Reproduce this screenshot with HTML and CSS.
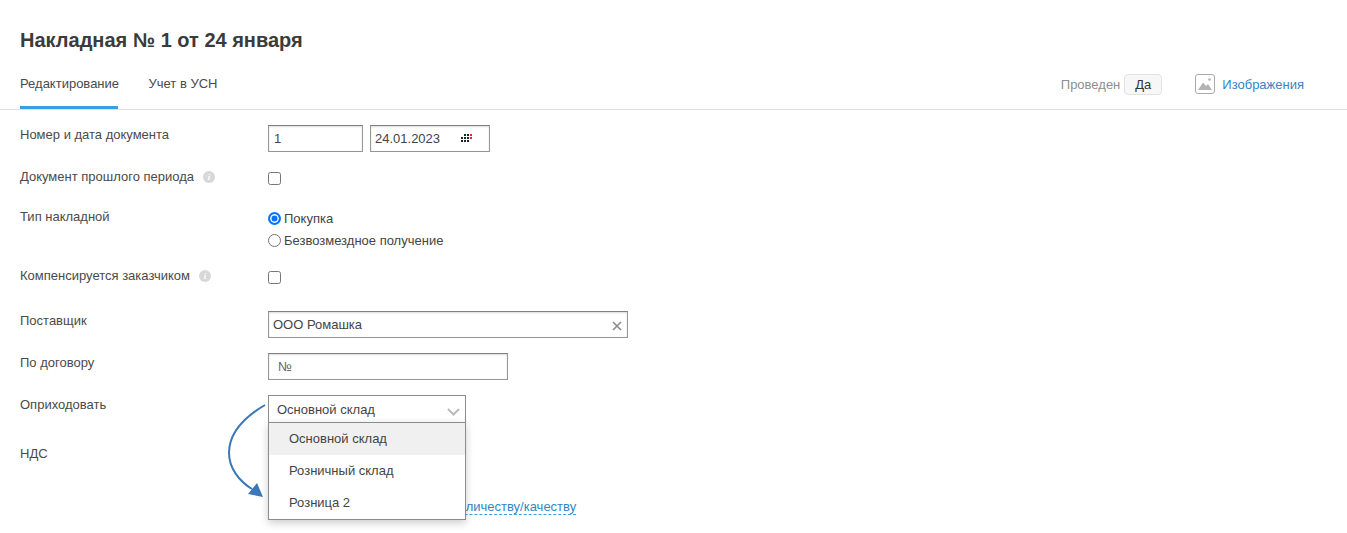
FILE: index.html
```html
<!DOCTYPE html>
<html lang="ru">
<head>
<meta charset="utf-8">
<title>Накладная № 1 от 24 января</title>
<link rel="stylesheet" href="styles.css">
</head>
<body>
<header class="head">
  <h1 class="title">Накладная № 1 от 24 января</h1>
  <nav class="tabs">
    <a class="tab tab-active">Редактирование</a>
    <a class="tab">Учет в УСН</a>
    <div class="tabs-right">
      <span class="posted">Проведен</span>
      <span class="yes">Да</span>
      <svg class="img-icon" width="20" height="20" viewBox="0 0 20 20">
        <rect x="0.5" y="0.5" width="19" height="19" rx="2.5" fill="#fff" stroke="#aaa"/>
        <path d="M3 16 L8 8.5 L11 12 L13 10 L17 16 Z" fill="#b3b3b3"/>
        <circle cx="14.5" cy="5.5" r="1.3" fill="#b3b3b3"/>
      </svg>
      <a class="img-link">Изображения</a>
    </div>
  </nav>
</header>
<main class="form">
  <div class="row row-doc">
    <label class="lbl">Номер и дата документа</label>
    <div class="fields">
      <div class="input w-num">1</div>
      <div class="input w-date">24.01.2023
        <svg class="cal" width="11" height="9" viewBox="0 0 11 9">
          <g fill="#222">
            <rect x="3" y="0" width="2" height="2"/><rect x="6" y="0" width="2" height="2"/>
            <rect x="0" y="3" width="2" height="2"/><rect x="3" y="3" width="2" height="2"/><rect x="6" y="3" width="2" height="2"/>
            <rect x="0" y="6" width="2" height="2"/><rect x="3" y="6" width="2" height="2"/><rect x="6" y="6" width="2" height="2"/>
          </g>
          <rect x="9" y="0" width="2" height="2" fill="#e2232a"/>
          <rect x="9" y="3" width="2" height="2" fill="#e2232a"/>
        </svg>
      </div>
    </div>
  </div>
  <div class="row row-past">
    <label class="lbl">Документ прошлого периода<span class="info">i</span></label>
    <div class="fields"><span class="check"></span></div>
  </div>
  <div class="row row-type">
    <label class="lbl">Тип накладной</label>
    <div class="radios">
      <div class="radio-line"><span class="radio radio-on"></span>Покупка</div>
      <div class="radio-line"><span class="radio"></span>Безвозмездное получение</div>
    </div>
  </div>
  <div class="row row-comp">
    <label class="lbl">Компенсируется заказчиком<span class="info">i</span></label>
    <div class="fields"><span class="check"></span></div>
  </div>
  <div class="row row-sup">
    <label class="lbl">Поставщик</label>
    <div class="fields">
      <div class="input w-sup">ООО Ромашка
        <svg class="clear" width="10" height="10" viewBox="0 0 10 10"><path d="M1 1 L9 9 M9 1 L1 9" stroke="#8c8c8c" stroke-width="1.6" fill="none"/></svg>
      </div>
    </div>
  </div>
  <div class="row row-con">
    <label class="lbl">По договору</label>
    <div class="fields"><div class="input w-con ph">№</div></div>
  </div>
  <div class="row row-wh">
    <label class="lbl">Оприходовать</label>
    <div class="fields select-wrap">
      <div class="select">Основной склад
        <svg class="chev" width="13" height="8" viewBox="0 0 13 8"><path d="M1 1 L6.5 6.5 L12 1" stroke="#bbb" stroke-width="2" fill="none"/></svg>
      </div>
      <ul class="menu">
        <li class="opt opt-hover">Основной склад</li>
        <li class="opt">Розничный склад</li>
        <li class="opt">Розница 2</li>
      </ul>
      <svg class="arrow" width="50" height="102" viewBox="0 0 50 102">
        <path d="M38 3 C14 17 2 34 2 51 C2 66 12 79 25 87" stroke="#3a78b8" stroke-width="2" fill="none"/>
        <path d="M21 92 L36 95 L30 81 Z" fill="#3a78b8"/>
      </svg>
    </div>
  </div>
  <div class="row row-vat">
    <label class="lbl">НДС</label>
  </div>
  <div class="row row-link">
    <a class="dash">по количеству/качеству</a>
  </div>
</main>
</body>
</html>
```
FILE: styles.css
```css
* { box-sizing: border-box; }
html, body { margin: 0; padding: 0; }
body {
  font-family: "Liberation Sans", Arial, sans-serif;
  font-size: 13px;
  color: #444;
  background: #fff;
  height: 533px;
  overflow: hidden;
}
.head { border-bottom: 1px solid #e0e0e0; padding: 0 20px; height: 110px; }
.title { margin: 0; padding-top: 28px; font-size: 20px; line-height: 24px; font-weight: 700; color: #3b3b3b; }
.tabs { display: flex; align-items: stretch; height: 57px; }
.tab { padding-top: 24px; margin-right: 30px; line-height: 15px; color: #4a4a4a; height: 57px; white-space: nowrap; }
.tab-active { width: 98px; margin-right: 31px; border-bottom: 3px solid #38a0e0; }
.tab-active + .tab { margin-left: -0.5px; }
.tabs-right { margin-left: auto; display: flex; align-items: center; padding-right: 23px; height: 50px; padding-top: 14px; }
.posted { color: #8e8e8e; margin-right: 4px; }
.yes { border: 1px solid #e2e2e2; background: #f7f7f7; border-radius: 4px; width: 38px; height: 21px; line-height: 19px; text-align: center; color: #333; }
.img-icon { margin-left: 33px; margin-right: 7px; }
.img-link { color: #3585c5; }
.form { padding: 0 20px; position: relative; }
.row { display: flex; }
.lbl { width: 248px; flex: none; line-height: 15px; color: #4a4a4a; }
.fields { display: flex; gap: 7px; }
.row-doc { height: 59px; padding-top: 15px; }
.row-doc .lbl { margin-top: 2px; }
.row-past { height: 40px; }
.row-type { height: 59px; }
.row-comp { height: 43px; }
.row-sup { height: 42px; }
.row-sup .lbl { padding-top: 2px; }
.row-con { height: 42px; }
.row-con .lbl { padding-top: 2px; }
.row-wh { height: 51px; }
.row-wh .lbl { padding-top: 2px; }
.input {
  height: 27px; border: 1px solid #969696; border-top-color: #7f7f7f;
  padding-left: 5px; line-height: 25px; color: #444; position: relative; background: #fff;
  box-shadow: inset 0 1px 2px rgba(0,0,0,.14);
}
.w-num { width: 95px; }
.w-date { width: 120px; padding-left: 4px; }
.w-sup { width: 360px; padding-left: 4px; }
.w-con { width: 240px; padding-left: 9px; }
.ph { color: #666; }
.cal { position: absolute; left: 90px; top: 8px; }
.clear { position: absolute; right: 5px; top: 9px; }
.check { display: block; width: 13px; height: 13px; border: 1px solid #767676; border-radius: 2.5px; background: #fff; margin-top: 3px; }
.info {
  display: inline-block; width: 12px; height: 12px; border-radius: 50%; background: #d8d8d8; color: #fff;
  font: italic 700 9px/12px "Liberation Serif", serif; text-align: center; margin-left: 9px; vertical-align: 1px;
}
.radios { display: flex; flex-direction: column; gap: 7px; margin-top: 2px; }
.radio-line { display: flex; align-items: center; height: 15px; line-height: 15px; color: #444; }
.radio { width: 13px; height: 13px; border: 1px solid #767676; border-radius: 50%; margin-right: 3px; background: #fff; }
.radio-on { border: 2px solid #0075ff; box-shadow: inset 0 0 0 1.5px #fff; background: #0075ff; }
.select-wrap { position: relative; display: block; }
.select {
  width: 198px; height: 28px; border: 1px solid #8c8c8c; line-height: 27px;
  padding-left: 8px; color: #444; position: relative; background: #fff;
}
.chev { position: absolute; right: 5px; top: 12px; }
.menu {
  list-style: none; margin: 0; padding: 0; position: absolute; left: 0; top: 27px; width: 198px; height: 98px;
  background: #fff; border: 1px solid #8c8c8c; box-shadow: 0 3px 8px rgba(0,0,0,.2); z-index: 2;
}
.opt { height: 32px; line-height: 31px; padding-left: 20px; color: #444; }
.opt-hover { background: #f0f0f0; }
.arrow { position: absolute; left: -41px; top: 7px; overflow: visible; z-index: 3; }
.row-vat { height: 54px; }
.row-link { padding-left: 415px; }
.dash { color: #3585c5; border-bottom: 1px dashed #38a0e0; line-height: 14px; }
```
